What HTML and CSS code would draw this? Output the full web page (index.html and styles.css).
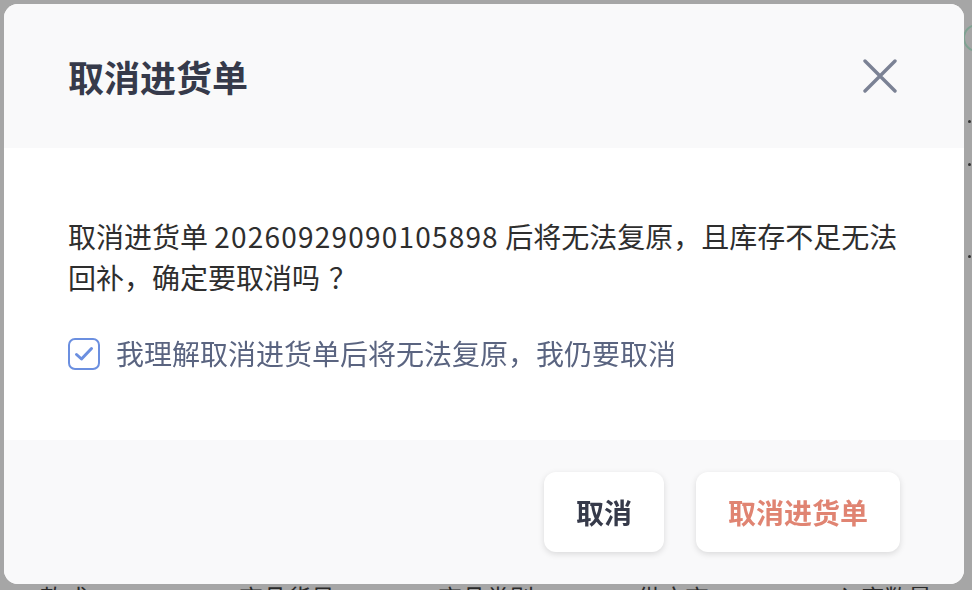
FILE: index.html
```html
<!DOCTYPE html>
<html lang="zh-CN">
<head>
<meta charset="utf-8">
<title>取消进货单</title>
<link rel="stylesheet" href="styles.css">
</head>
<body>
<div class="page">
  <div class="page-avatar"></div>
  <div class="page-dot dot-1"></div>
  <div class="page-dot dot-2"></div>
  <div class="page-dot dot-3"></div>
  <div class="table-head">
    <span>款式</span>
    <span>商品货号</span>
    <span>商品类别</span>
    <span>供应商</span>
    <span>入库数量</span>
  </div>
</div>

<div class="modal">
  <div class="modal-header">
    <h2 class="modal-title">取消进货单</h2>
    <button class="close" aria-label="关闭">
      <svg width="34" height="34" viewBox="0 0 34 34" fill="none">
        <path d="M2 2 L32 32 M32 2 L2 32" stroke="#7b8294" stroke-width="3.4" stroke-linecap="round"/>
      </svg>
    </button>
  </div>
  <div class="modal-body">
    <p class="message">取消进货单 <span class="order-no">20260929090105898</span> 后将无法复原，且库存不足无法回补，确定要取消吗<span class="q">？</span></p>
    <label class="confirm">
      <span class="checkbox">
        <svg width="20" height="16" viewBox="0 0 20 16" fill="none">
          <path d="M2.5 8.5 L7.5 13 L17.5 2.5" stroke="#6b8fe0" stroke-width="3" stroke-linecap="round" stroke-linejoin="round"/>
        </svg>
      </span>
      <span class="confirm-text">我理解取消进货单后将无法复原，我仍要取消</span>
    </label>
  </div>
  <div class="modal-footer">
    <button class="btn">取消</button>
    <button class="btn btn-danger">取消进货单</button>
  </div>
</div>
</body>
</html>
```

FILE: styles.css
```css
* { box-sizing: border-box; }

html, body {
  margin: 0;
  padding: 0;
  width: 100%;
  height: 100%;
  overflow: hidden;
}

body {
  background: #a6a6a6;
  font-family: "Noto Sans CJK SC", sans-serif;
}

.page {
  position: relative;
  height: 100vh;
  padding-top: 582px;
  padding-left: 40px;
}

.table-head {
  display: grid;
  grid-template-columns: repeat(5, 199px);
  font-size: 24px;
  line-height: 30px;
  color: #2a2a2a;
}

.page-avatar {
  position: absolute;
  left: 963px;
  top: 24px;
  width: 28px;
  height: 28px;
  border-radius: 50%;
  border: 2px solid #7fa292;
}

.page-dot {
  position: absolute;
  left: 968px;
  width: 3px;
  height: 3px;
  border-radius: 50%;
  background: #333;
}
.dot-1 { top: 120px; }
.dot-2 { top: 163px; }
.dot-3 { top: 255px; }

.modal {
  position: fixed;
  top: 4px;
  left: 4px;
  width: 960px;
  height: 580px;
  border-radius: 14px;
  overflow: hidden;
  background: #ffffff;
  display: flex;
  flex-direction: column;
}

.modal-header {
  height: 144px;
  flex: 0 0 144px;
  background: #f9f9fa;
  display: flex;
  align-items: center;
  justify-content: space-between;
  padding: 0 67px 0 64px;
}

.modal-title {
  margin: 0;
  font-size: 36px;
  font-weight: 700;
  line-height: 1;
  color: #363a4a;
}

.close {
  border: 0;
  background: transparent;
  padding: 0;
  width: 34px;
  height: 34px;
  display: flex;
  align-items: center;
  justify-content: center;
}

.modal-body {
  flex: 1 1 auto;
  background: #ffffff;
  padding: 68px 58px 0 64px;
}

.message {
  margin: 0;
  font-size: 28px;
  line-height: 41px;
  color: #2e2e2e;
}

.order-no {
  letter-spacing: 1.2px;
}

.q {
  padding-left: 9px;
}

.confirm {
  margin-top: 35px;
  display: flex;
  align-items: center;
  gap: 16px;
  height: 41px;
}

.checkbox {
  width: 32px;
  height: 32px;
  border: 2px solid #6b8fe0;
  border-radius: 7px;
  background: #fff;
  display: flex;
  align-items: center;
  justify-content: center;
  flex: 0 0 auto;
}

.confirm-text {
  font-size: 28px;
  line-height: 41px;
  color: #5a6480;
}

.modal-footer {
  height: 144px;
  flex: 0 0 144px;
  background: #f9f9fa;
  display: flex;
  align-items: center;
  justify-content: flex-end;
  gap: 32px;
  padding: 0 64px;
}

.btn {
  height: 80px;
  padding: 0 32px;
  border: 0;
  border-radius: 12px;
  background: #ffffff;
  box-shadow: 0 2px 6px rgba(0, 0, 0, 0.13);
  font-family: "Noto Sans CJK SC", sans-serif;
  font-size: 28px;
  font-weight: 700;
  color: #363a4a;
}

.btn-danger {
  color: #e08472;
}
```
